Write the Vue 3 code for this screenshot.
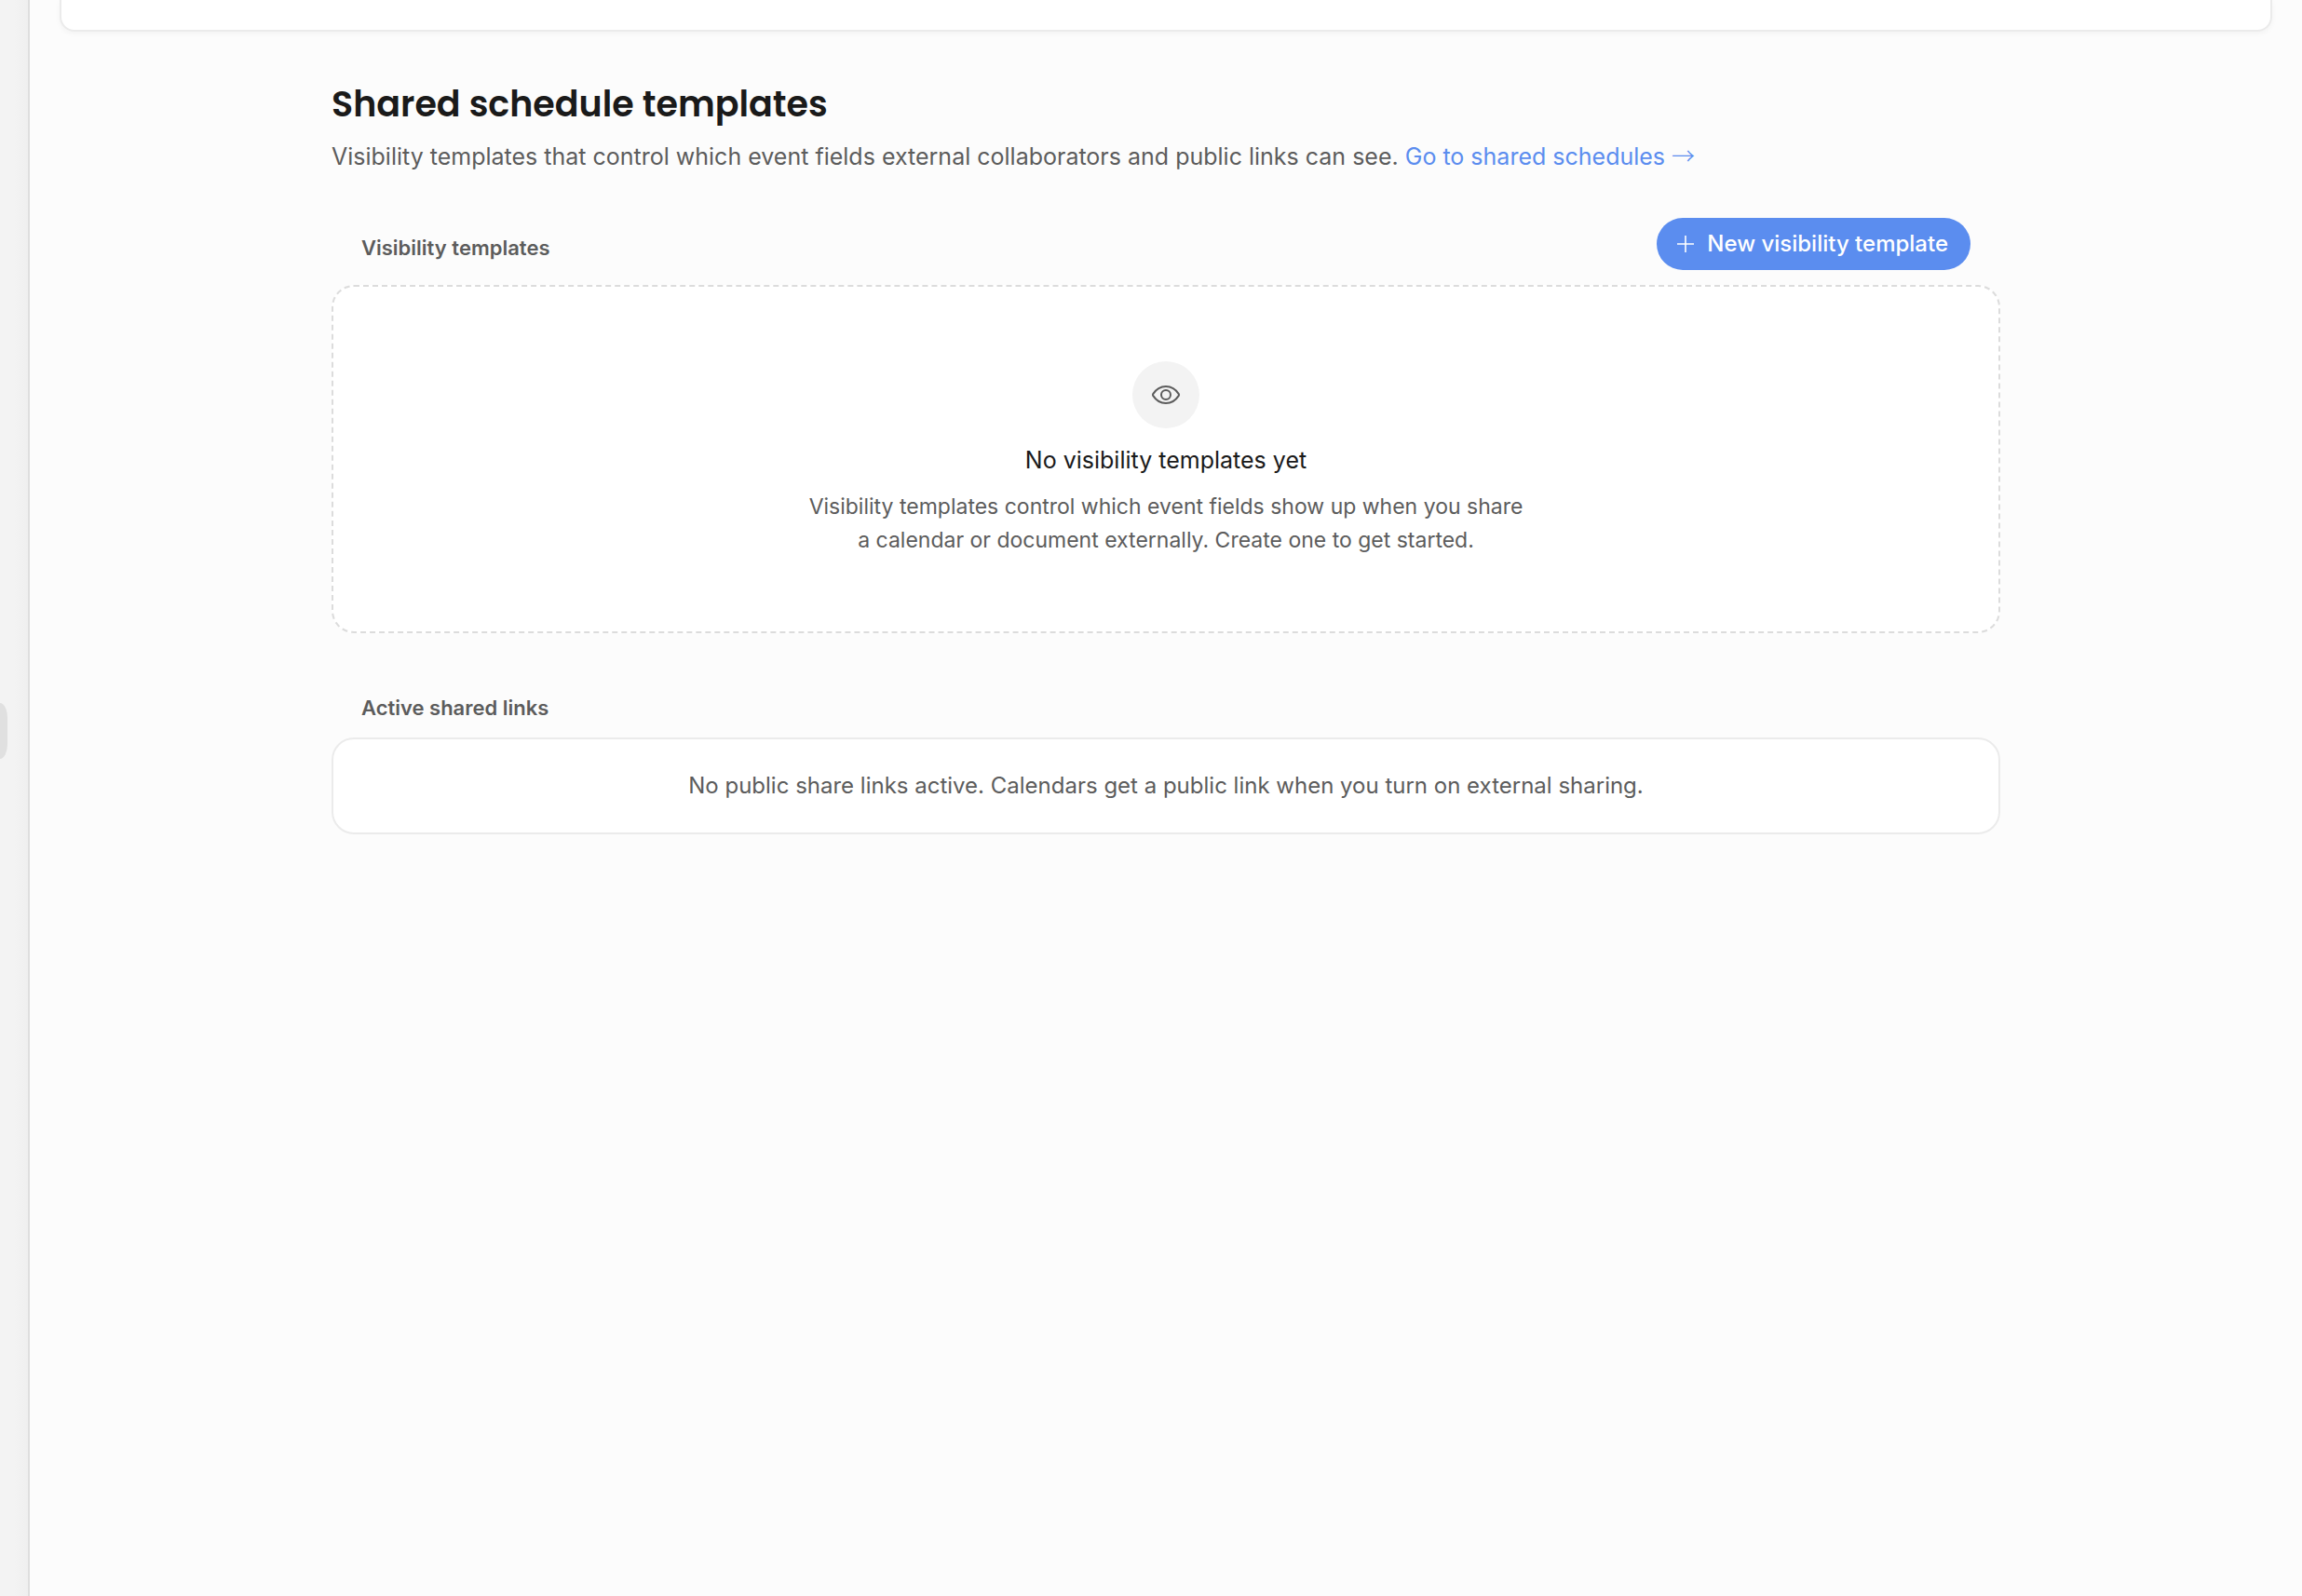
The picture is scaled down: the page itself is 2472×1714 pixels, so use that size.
<script setup>
const emptyLinks = 'No public share links active. Calendars get a public link when you turn on external sharing.'
</script>

<template>
  <div class="shell">
    <aside class="sidebar">
      <button class="handle" type="button" aria-label="Toggle sidebar"></button>
    </aside>
    <div class="main">
      <section class="previous-card"></section>
      <main class="content">
        <header class="intro">
          <h1>Shared schedule templates</h1>
          <p>
            Visibility templates that control which event fields external collaborators and public links can see.
            <a href="#">Go to shared schedules <span class="arrow">→</span></a>
          </p>
        </header>

        <section class="group">
          <div class="group-head with-action">
            <h2>Visibility templates</h2>
            <button class="primary" type="button">
              <svg width="18" height="18" viewBox="0 0 18 18" aria-hidden="true">
                <path d="M9 0V18M0 9H18" fill="none" stroke="currentColor" stroke-width="1.6" />
              </svg>
              <span>New visibility template</span>
            </button>
          </div>
          <div class="empty">
            <span class="badge">
              <svg width="32" height="32" viewBox="0 0 32 32" fill="none" stroke="currentColor" stroke-width="2" stroke-linejoin="round" aria-hidden="true">
                <path d="M2.2 15.1C5.6 9.8 10.500 7 16 7s10.400 2.800 13.800 8.100c.35.55.35 1.250 0 1.800C26.400 22.200 21.500 25 16 25S5.600 22.200 2.200 16.900c-.35-.55-.35-1.250 0-1.800Z" />
                <circle cx="16" cy="16" r="5" />
              </svg>
            </span>
            <h3>No visibility templates yet</h3>
            <p>
              Visibility templates control which event fields show up when you share<br />
              a calendar or document externally. Create one to get started.
            </p>
          </div>
        </section>

        <section class="group">
          <div class="group-head">
            <h2>Active shared links</h2>
          </div>
          <div class="links">{{ emptyLinks }}</div>
        </section>
      </main>
    </div>
  </div>
</template>

<style>
body {
  background: #fcfcfc;
}
</style>

<style scoped>
.shell {
  display: flex;
  min-height: 100vh;
  font-family: Inter, "Liberation Sans", sans-serif;
  color: #5c5c5c;
}
.sidebar {
  box-sizing: border-box;
  flex: none;
  display: flex;
  align-items: center;
  width: 32px;
  padding-bottom: 144px;
  border-right: 2px solid #dedede;
  background: linear-gradient(to right, #f3f3f3 16px, #efefef);
}
.handle {
  width: 8px;
  height: 60px;
  padding: 0;
  border: 0;
  border-radius: 0 8px 8px 0 / 0 16px 16px 0;
  background: #e0e0e0;
}
.main {
  flex: 1;
  min-width: 0;
  padding: 0 32px;
}
.previous-card {
  box-sizing: border-box;
  height: 34px;
  border: 2px solid #ebebeb;
  border-top: 0;
  border-radius: 0 0 16px 16px;
  background: #fff;
  box-shadow: 0 2px 6px rgba(0, 0, 0, 0.04);
}
.content {
  max-width: 1792px;
  margin: 0 auto;
  padding-top: 50px;
}
h1,
h2,
h3,
p {
  margin: 0;
}
h1 {
  font-family: Poppins, Inter, sans-serif;
  font-size: 38px;
  font-weight: 600;
  line-height: 56px;
  color: #1a1a1a;
}
.intro p {
  margin-top: 8px;
  font-size: 25px;
  line-height: 40px;
}
a {
  color: #5b8def;
  text-decoration: none;
}
.arrow {
  font-family: "Noto Sans CJK SC", sans-serif;
  font-weight: 300;
  line-height: 1;
}
.group {
  margin-top: 64px;
}
.intro + .group {
  margin-top: 46px;
}
.group-head {
  display: flex;
  align-items: flex-end;
  justify-content: space-between;
  padding: 0 32px 16px;
}
h2 {
  font-size: 22px;
  font-weight: 600;
  line-height: 32px;
}
.with-action h2 {
  padding-bottom: 8px;
}
.primary {
  display: flex;
  align-items: center;
  gap: 14px;
  height: 56px;
  padding: 0 24px 0 22px;
  border: 0;
  border-radius: 28px;
  background: #5b8def;
  color: #fff;
  font: 500 24px/32px Inter, sans-serif;
}
.empty {
  display: flex;
  flex-direction: column;
  align-items: center;
  padding: 80px 32px;
  border: 2px dashed #dcdcdc;
  border-radius: 24px;
  background: #fff;
  text-align: center;
}
.badge {
  display: flex;
  align-items: center;
  justify-content: center;
  width: 72px;
  height: 72px;
  border-radius: 50%;
  background: #f3f3f3;
}
h3 {
  margin-top: 16px;
  font-size: 25px;
  font-weight: 400;
  line-height: 36px;
  color: #1a1a1a;
}
.empty p {
  margin-top: 14px;
  font-size: 23px;
  line-height: 36px;
}
.links {
  padding: 32px;
  border: 2px solid #ebebeb;
  border-radius: 24px;
  background: #fff;
  font-size: 24px;
  line-height: 36px;
  text-align: center;
}
</style>
